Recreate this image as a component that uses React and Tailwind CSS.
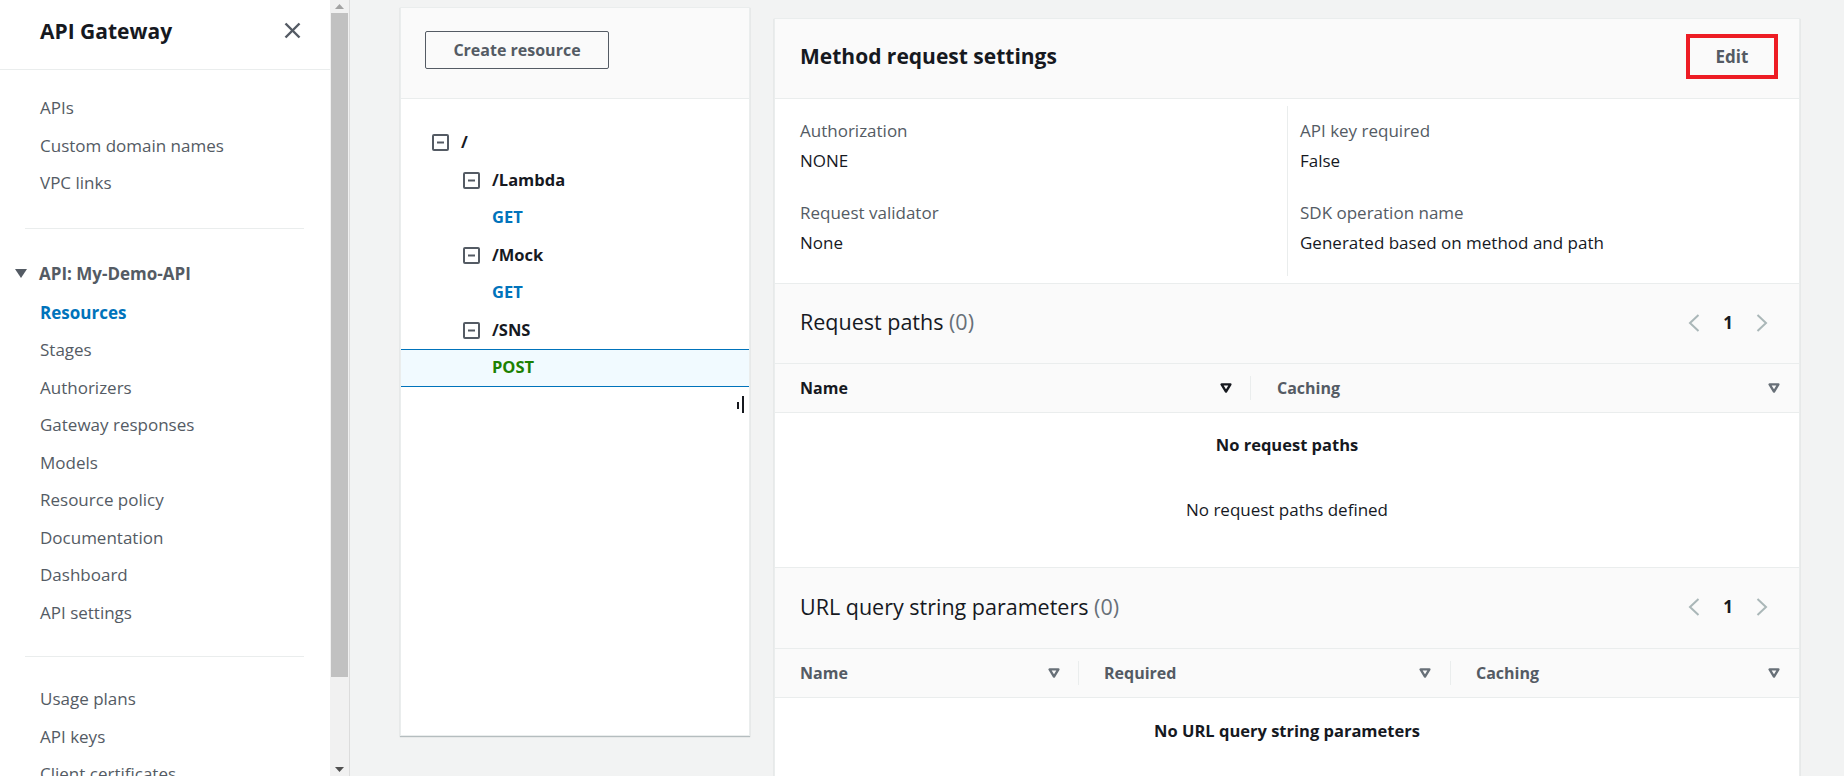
import React from "react";

const navTop = ["APIs", "Custom domain names", "VPC links"];
const navApi = [
  "Resources",
  "Stages",
  "Authorizers",
  "Gateway responses",
  "Models",
  "Resource policy",
  "Documentation",
  "Dashboard",
  "API settings",
];
const navBottom = ["Usage plans", "API keys", "Client certificates"];

function BoxIcon() {
  return (
    <svg width="17" height="17" viewBox="0 0 17 17" className="shrink-0">
      <rect x="1" y="1" width="15" height="15" rx="1" fill="none" stroke="#545b64" strokeWidth="2" />
      <line x1="5" y1="8.5" x2="12" y2="8.5" stroke="#545b64" strokeWidth="2" />
    </svg>
  );
}

function SortIcon({ color = "#545b64" }) {
  return (
    <svg width="12" height="10" viewBox="0 0 12 10" className="shrink-0">
      <path d="M1.6 1.4 H10.4 L6 8.6 Z" fill="none" stroke={color} strokeWidth="2.4" strokeLinejoin="round" />
    </svg>
  );
}

function ChevronLeft() {
  return (
    <svg width="12" height="20" viewBox="0 0 12 20" className="shrink-0">
      <polyline points="10.5,2 2,10 10.5,18" fill="none" stroke="#aab7b8" strokeWidth="2" />
    </svg>
  );
}

function ChevronRight() {
  return (
    <svg width="12" height="20" viewBox="0 0 12 20" className="shrink-0">
      <polyline points="1.5,2 10,10 1.5,18" fill="none" stroke="#aab7b8" strokeWidth="2" />
    </svg>
  );
}

function Pagination() {
  return (
    <div className="flex items-center gap-[23px]">
      <ChevronLeft />
      <span className="text-[17px] font-bold text-[#16191f] leading-[24px]">1</span>
      <ChevronRight />
    </div>
  );
}

function NavItem({ children, active }) {
  return (
    <div
      className={
        "h-[37.5px] flex items-center pl-[40px] text-[17px] " +
        (active ? "font-bold text-[#0073bb]" : "text-[#545b64]")
      }
    >
      {children}
    </div>
  );
}

function TreeRow({ level, label, kind, selected }) {
  const pad = level === 0 ? "pl-[31px]" : level === 1 ? "pl-[62px]" : "pl-[91px]";
  let text = "text-[16.5px] font-bold text-[#16191f]";
  if (kind === "GET") text = "text-[16.5px] font-bold text-[#0073bb]";
  if (kind === "POST") text = "text-[16.5px] font-bold text-[#1d8102]";
  return (
    <div
      className={
        "h-[37.5px] flex items-center gap-[12px] " +
        pad +
        (selected ? " bg-[#f1faff] border-y border-[#0073bb]" : "")
      }
    >
      {level < 2 && <BoxIcon />}
      <span className={text}>{label}</span>
    </div>
  );
}

function Field({ label, value, first }) {
  return (
    <div className={first ? "" : "mt-[28px]"}>
      <div className="h-[24px] leading-[24px] text-[17px] text-[#545b64]">{label}</div>
      <div className="mt-[6px] h-[24px] leading-[24px] text-[17px] text-[#16191f]">{value}</div>
    </div>
  );
}

export default function App() {
  return (
    <div className="flex h-[776px] w-[1844px] overflow-hidden bg-[#f2f3f3] font-['Open_Sans',sans-serif]">
      {/* Sidebar */}
      <aside className="w-[330px] shrink-0 h-full bg-white overflow-hidden">
        <div className="h-[70px] border-b border-[#eaeded] pb-[8px] flex items-center justify-between pl-[40px] pr-[29px]">
          <h1 className="text-[21px] font-bold text-[#16191f] leading-[28px]">API Gateway</h1>
          <svg width="17" height="17" viewBox="0 0 17 17">
            <line x1="1.5" y1="1.5" x2="15.5" y2="15.5" stroke="#545b64" strokeWidth="2.4" />
            <line x1="15.5" y1="1.5" x2="1.5" y2="15.5" stroke="#545b64" strokeWidth="2.4" />
          </svg>
        </div>
        <div className="pt-[19px]">
          {navTop.map((n) => (
            <NavItem key={n}>{n}</NavItem>
          ))}
        </div>
        <div className="mt-[26px] ml-[25px] mr-[26px] h-px bg-[#eaeded]" />
        <div className="mt-[25px] h-[40px] flex items-center pl-[15px] gap-[12px]">
          <svg width="12" height="9" viewBox="0 0 12 9">
            <polygon points="0,0 12,0 6,9" fill="#545b64" />
          </svg>
          <span className="text-[17px] font-bold text-[#545b64]">API: My-Demo-API</span>
        </div>
        {navApi.map((n) => (
          <NavItem key={n} active={n === "Resources"}>
            {n}
          </NavItem>
        ))}
        <div className="mt-[25px] ml-[25px] mr-[26px] h-px bg-[#eaeded]" />
        <div className="pt-[23px]">
          {navBottom.map((n) => (
            <NavItem key={n}>{n}</NavItem>
          ))}
        </div>
      </aside>

      {/* Sidebar scrollbar */}
      <div className="w-[20px] shrink-0 h-full bg-[#f1f1f1] border-r border-[#dcdcdc] flex flex-col items-center">
        <div className="h-[13px] flex items-center justify-center">
          <svg width="9" height="5" viewBox="0 0 9 5">
            <polygon points="0,5 9,5 4.5,0" fill="#a3a3a3" />
          </svg>
        </div>
        <div className="w-[17px] h-[664px] bg-[#c1c1c1]" />
        <div className="flex-1" />
        <div className="h-[13px] flex items-center justify-center">
          <svg width="9" height="5" viewBox="0 0 9 5">
            <polygon points="0,0 9,0 4.5,5" fill="#505050" />
          </svg>
        </div>
      </div>

      {/* Main */}
      <main className="flex-1 flex items-start gap-[24px] pl-[50px]">
        {/* Resource tree panel */}
        <section className="relative mt-[7px] w-[350px] h-[729px] shrink-0 bg-white border border-[#eaeded] shadow-[0_1px_1px_0_rgba(0,28,36,0.25)]">
          <div className="h-[91px] bg-[#fafafa] border-b border-[#eaeded] pl-[24px] pt-[23px]">
            <button className="h-[38px] w-[184px] border border-[#545b64] rounded-[2px] text-[16px] font-bold text-[#545b64]">
              Create resource
            </button>
          </div>
          <div className="pt-[25px]">
            <TreeRow level={0} label="/" />
            <TreeRow level={1} label="/Lambda" />
            <TreeRow level={2} label="GET" kind="GET" />
            <TreeRow level={1} label="/Mock" />
            <TreeRow level={2} label="GET" kind="GET" />
            <TreeRow level={1} label="/SNS" />
            <TreeRow level={2} label="POST" kind="POST" selected />
          </div>
          <div className="absolute right-[5px] top-[388px] flex items-end gap-[3px]">
            <div className="w-[2px] h-[7px] bg-[#16191f] mb-[4px]" />
            <div className="w-[2px] h-[17px] bg-[#16191f]" />
          </div>
        </section>

        {/* Method request settings card */}
        <section className="mt-[18px] w-[1026px] shrink-0 bg-white border border-[#eaeded] shadow-[0_1px_1px_0_rgba(0,28,36,0.25)]">
          <div className="h-[79px] bg-[#fafafa] flex items-center justify-between pl-[25px] pr-[21px] pb-[4px]">
            <h2 className="text-[21px] font-bold text-[#16191f]">Method request settings</h2>
            <div className="w-[92px] h-[45px] border-[4px] border-[#ed1c24] flex items-center justify-center">
              <span className="text-[17px] font-bold text-[#545b64]">Edit</span>
            </div>
          </div>
          <div className="border-t border-[#eaeded] py-[7px] grid grid-cols-2">
            <div className="pl-[25px] pt-[13px] pb-[21px]">
              <Field first label="Authorization" value="NONE" />
              <Field label="Request validator" value="None" />
            </div>
            <div className="border-l border-[#eaeded] pl-[12px] pt-[13px] pb-[21px]">
              <Field first label="API key required" value="False" />
              <Field label="SDK operation name" value="Generated based on method and path" />
            </div>
          </div>

          {/* Request paths */}
          <div className="h-[80px] border-t border-[#eaeded] bg-[#fafafa] flex items-center justify-between pl-[25px] pr-[31px] pb-[2px]">
            <h3 className="text-[21.5px] text-[#16191f]">
              Request paths <span className="text-[#687078]">(0)</span>
            </h3>
            <Pagination />
          </div>
          <div className="h-[49px] border-t border-[#eaeded] bg-[#fafafa] flex items-center">
            <div className="w-[475px] flex items-center justify-between pl-[25px] pr-[18px]">
              <span className="text-[16px] font-bold text-[#16191f]">Name</span>
              <SortIcon color="#16191f" />
            </div>
            <div className="w-px h-[24px] bg-[#eaeded]" />
            <div className="flex-1 flex items-center justify-between pl-[26px] pr-[19px]">
              <span className="text-[16px] font-bold text-[#545b64]">Caching</span>
              <SortIcon color="#687078" />
            </div>
          </div>
          <div className="h-[155px] border-t border-[#eaeded] flex flex-col items-center pt-[20px]">
            <div className="h-[24px] leading-[24px] text-[16.5px] font-bold text-[#16191f]">No request paths</div>
            <div className="mt-[41px] h-[24px] leading-[24px] text-[17px] text-[#16191f]">No request paths defined</div>
          </div>

          {/* URL query string parameters */}
          <div className="h-[81px] border-t border-[#eaeded] bg-[#fafafa] flex items-center justify-between pl-[25px] pr-[31px] pb-[2px]">
            <h3 className="text-[21.5px] text-[#16191f]">
              URL query string parameters <span className="text-[#687078]">(0)</span>
            </h3>
            <Pagination />
          </div>
          <div className="h-[49px] border-t border-[#eaeded] bg-[#fafafa] flex items-center">
            <div className="w-[303px] flex items-center justify-between pl-[25px] pr-[18px]">
              <span className="text-[16px] font-bold text-[#545b64]">Name</span>
              <SortIcon color="#687078" />
            </div>
            <div className="w-px h-[24px] bg-[#eaeded]" />
            <div className="w-[371px] flex items-center justify-between pl-[25px] pr-[19px]">
              <span className="text-[16px] font-bold text-[#545b64]">Required</span>
              <SortIcon color="#687078" />
            </div>
            <div className="w-px h-[24px] bg-[#eaeded]" />
            <div className="flex-1 flex items-center justify-between pl-[25px] pr-[19px]">
              <span className="text-[16px] font-bold text-[#545b64]">Caching</span>
              <SortIcon color="#687078" />
            </div>
          </div>
          <div className="h-[120px] border-t border-[#eaeded] flex flex-col items-center pt-[21px]">
            <div className="h-[24px] leading-[24px] text-[16.5px] font-bold text-[#16191f]">
              No URL query string parameters
            </div>
          </div>
        </section>
      </main>
    </div>
  );
}
